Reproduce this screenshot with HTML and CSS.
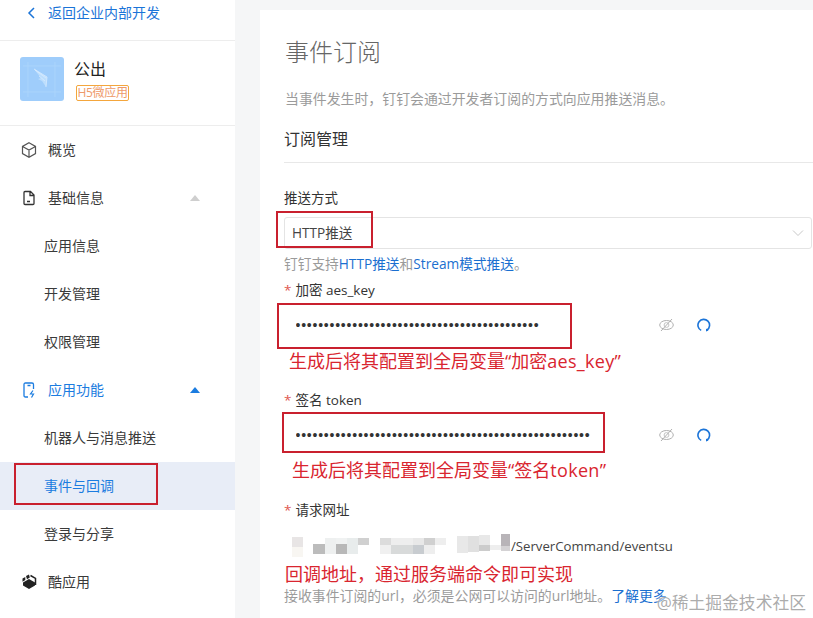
FILE: index.html
```html
<!DOCTYPE html>
<html lang="zh-CN">
<head>
<meta charset="utf-8">
<title>事件订阅</title>
<link rel="stylesheet" href="styles.css">
</head>
<body>
<div class="page">
  <aside class="sidebar">
    <a class="back">
      <svg class="back-icon" width="9" height="14" viewBox="0 0 9 14"><path d="M7 2 2 7l5 5" fill="none" stroke="#1b74d8" stroke-width="1.5"/></svg>
      <span>返回企业内部开发</span>
    </a>
    <div class="app">
      <div class="app-logo">
        <svg width="44" height="44" viewBox="0 0 44 44"><rect width="44" height="44" rx="3" fill="#9fcdfb"/><path d="M8 5v35M35 5v35M3 9h38M3 35h38" stroke="#add5fc" stroke-width=".8"/><path d="M14 12 27 20 26 30 22 24 18 22 21 21 14 12z" fill="#bcdefd"/><path d="M15 13 26 21M19 19l6 5M14 12 27 20 26 30" fill="none" stroke="#d8ebfe" stroke-width=".8"/></svg>
      </div>
      <div class="app-info">
        <div class="app-name">公出</div>
        <span class="app-tag">H5微应用</span>
      </div>
    </div>
    <nav class="menu">
      <div class="menu-item">
        <svg class="menu-icon" width="16" height="16" viewBox="0 0 16 16"><path d="M8 .8l6.500 3.600v7.200L8 15.200l-6.500-3.600V4.400zM1.500 4.400 8 8l6.500-3.600M8 8v7.200" fill="none" stroke="#555" stroke-width="1.200"/></svg>
        <span>概览</span>
      </div>
      <div class="menu-item">
        <svg class="menu-icon" width="16" height="16" viewBox="0 0 16 16"><path d="M3 2.500Q3 1.500 4 1.500h5.500L13 5v8.500q0 1-1 1H4q-1 0-1-1zM9 1.500V5.500h4M6 11.500h3" fill="none" stroke="#333" stroke-width="1.300"/></svg>
        <span class="menu-label">基础信息</span>
        <i class="caret"></i>
      </div>
      <div class="menu-sub">应用信息</div>
      <div class="menu-sub">开发管理</div>
      <div class="menu-sub">权限管理</div>
      <div class="menu-item is-open">
        <svg class="menu-icon" width="16" height="16" viewBox="0 0 16 16"><path d="M7 15H4.500Q3 15 3 13.500v-11Q3 1 4.500 1h6.500Q12.500 1 12.500 2.500V7M6.500 3.500h3" fill="none" stroke="#1b7ce0" stroke-width="1.300"/><path d="M12 8.500 9.500 12h3L10.500 15.500" fill="none" stroke="#1b7ce0" stroke-width="1.200"/></svg>
        <span class="menu-label">应用功能</span>
        <i class="caret"></i>
      </div>
      <div class="menu-sub">机器人与消息推送</div>
      <div class="menu-sub is-active">事件与回调</div>
      <div class="menu-sub">登录与分享</div>
      <div class="menu-item">
        <svg class="menu-icon" width="16" height="16" viewBox="0 0 16 16"><path d="M2 8.500 8 5l6 3.500v3L8 15l-6-3.500z" fill="#222"/><path d="M9.500 1.500 14.500 4.400V11" fill="none" stroke="#222" stroke-width="1.500"/><path d="M5 2l3-1.500 .8 3-2.800 1.700zM1.500 4.500 4.300 3v3L1.500 7.800z" fill="#222"/></svg>
        <span>酷应用</span>
      </div>
    </nav>
  </aside>

  <main class="card">
    <h1 class="title">事件订阅</h1>
    <p class="desc">当事件发生时，钉钉会通过开发者订阅的方式向应用推送消息。</p>
    <h2 class="section">订阅管理</h2>

    <div class="label label-first">推送方式</div>
    <div class="select">
      <span>HTTP推送</span>
      <svg width="12" height="8" viewBox="0 0 12 8"><path d="M1 1.500l5 5 5-5" fill="none" stroke="#c8c8c8" stroke-width="1"/></svg>
    </div>
    <p class="help">钉钉支持<a class="link">HTTP推送</a>和<a class="link">Stream模式推送</a>。</p>

    <div class="label label-req label-second"><i class="star">*</i>加密 aes_key</div>
    <div class="secret-row">
      <span class="dots">•••••••••••••••••••••••••••••••••••••••••••</span>
      <svg class="eye" width="15" height="14" viewBox="0 0 15 14"><ellipse cx="7.500" cy="7" rx="6.800" ry="4.500" fill="none" stroke="#b0b0b0"/><circle cx="7.500" cy="7" r="2.400" fill="none" stroke="#c4c4c4"/><path d="M2 13 13 1" stroke="#b0b0b0"/></svg>
      <svg class="refresh" width="14" height="14" viewBox="0 0 14 14"><path d="M4.200 12.400A5.800 5.800 0 1 1 10 12" fill="none" stroke="#1b74d8" stroke-width="1.600"/><path d="M9 10.500v3l2.500-1z" fill="#1b74d8"/></svg>
    </div>
    <p class="note note-aes">生成后将其配置到全局变量“加密<span class="note-latin">aes_key</span>”</p>

    <div class="label label-req label-third"><i class="star">*</i>签名 token</div>
    <div class="secret-row">
      <span class="dots">••••••••••••••••••••••••••••••••••••••••••••••••••••</span>
      <svg class="eye" width="15" height="14" viewBox="0 0 15 14"><ellipse cx="7.500" cy="7" rx="6.800" ry="4.500" fill="none" stroke="#b0b0b0"/><circle cx="7.500" cy="7" r="2.400" fill="none" stroke="#c4c4c4"/><path d="M2 13 13 1" stroke="#b0b0b0"/></svg>
      <svg class="refresh" width="14" height="14" viewBox="0 0 14 14"><path d="M4.200 12.400A5.800 5.800 0 1 1 10 12" fill="none" stroke="#1b74d8" stroke-width="1.600"/><path d="M9 10.500v3l2.500-1z" fill="#1b74d8"/></svg>
    </div>
    <p class="note note-token">生成后将其配置到全局变量“签名<span class="note-latin">token</span>”</p>

    <div class="label label-req label-fourth"><i class="star">*</i>请求网址</div>
    <div class="url-row">
      <svg class="mosaic" width="227" height="32" viewBox="285 530 227 32">
        <rect x="292" y="538" width="11" height="10" fill="#e8e5e5"/>
        <rect x="292" y="548" width="11" height="10" fill="#f8f6f2"/>
        <rect x="313" y="545" width="12" height="10" fill="#bcbcbc"/>
        <rect x="325" y="539" width="11" height="16" fill="#eef0f0"/>
        <rect x="336" y="545" width="11" height="10" fill="#b8b8b8"/>
        <rect x="336" y="539" width="11" height="6" fill="#f0f2f2"/>
        <rect x="347" y="539" width="11" height="16" fill="#e8ecec"/>
        <rect x="358" y="539" width="11" height="7" fill="#d0d0d0"/>
        <rect x="380" y="539" width="11" height="7" fill="#dcdcdc"/>
        <rect x="380" y="546" width="11" height="9" fill="#f0f0f0"/>
        <rect x="391" y="539" width="22" height="7" fill="#eeeeee"/>
        <rect x="391" y="546" width="22" height="9" fill="#d8dada"/>
        <rect x="413" y="539" width="11" height="7" fill="#e8e8e8"/>
        <rect x="413" y="546" width="11" height="9" fill="#c8ccd0"/>
        <rect x="424" y="539" width="11" height="7" fill="#d0d0d0"/>
        <rect x="424" y="546" width="11" height="9" fill="#eeeeee"/>
        <rect x="435" y="539" width="11" height="7" fill="#eeeeee"/>
        <rect x="457" y="537" width="11" height="17" fill="#e8e8e8"/>
        <rect x="468" y="537" width="11" height="16" fill="#e0e0e0"/>
        <rect x="479" y="536" width="11" height="10" fill="#e8e8e8"/>
        <rect x="479" y="546" width="11" height="6" fill="#cccccc"/>
        <rect x="490" y="546" width="12" height="5" fill="#eeeeee"/>
        <rect x="501" y="535" width="9" height="12" fill="#b8b4b8"/>
        <rect x="501" y="547" width="9" height="5" fill="#d4d2d4"/>
      </svg>
      <span class="url-text">/ServerCommand/eventsub</span>
    </div>
    <p class="note note-url">回调地址，通过服务端命令即可实现</p>
    <p class="help help-tight">接收事件订阅的url，必须是公网可以访问的url地址。<a class="link">了解更多</a></p>
  </main>

  <div class="mark mark-nav"></div>
  <div class="mark mark-select"></div>
  <div class="mark mark-aes"></div>
  <div class="mark mark-token"></div>
  <div class="watermark">@稀土掘金技术社区</div>
</div>
</body>
</html>
```
FILE: styles.css
```css
* { box-sizing: border-box; }
html, body { margin: 0; padding: 0; }
body {
  font-family: "Open Sans", "Noto Sans CJK SC", sans-serif;
  color: #333;
  background: #f5f6f7;
}
p, h1, h2 { margin: 0; font-weight: 400; }
i { font-style: normal; }

.page {
  position: relative;
  display: flex;
  width: 813px;
  height: 618px;
  overflow: hidden;
}

/* sidebar */
.sidebar {
  width: 235px;
  flex: none;
  background: #fff;
  font-size: 14px;
  line-height: 20px;
}
.back {
  display: flex;
  align-items: center;
  height: 41px;
  padding: 0 0 15px 27px;
  border-bottom: 1px solid #ededed;
  color: #1b74d8;
}
.back-icon { margin-right: 12px; }
.app {
  display: flex;
  height: 85px;
  padding: 16px 0 0 20px;
  border-bottom: 1px solid #ededed;
}
.app-logo { width: 44px; height: 44px; }
.app-logo svg { display: block; }
.app-info { margin-left: 10px; }
.app-name { font-size: 16px; line-height: 24px; color: #222; }
.app-tag {
  display: block;
  width: 53px;
  height: 16px;
  margin: 4px 0 0 2px;
  border: 1px solid #f4a63d;
  border-radius: 2px;
  font-size: 12px;
  line-height: 14px;
  text-align: center;
  white-space: nowrap;
  color: #ee9a6a;
  letter-spacing: -.3px;
}
.menu-item, .menu-sub {
  display: flex;
  align-items: center;
  height: 48px;
  color: #3a3a3a;
}
.menu-item { padding-left: 21px; }
.menu-sub { padding-left: 44px; }
.menu-icon { margin-right: 11px; flex: none; }
.menu-label { flex: 1; }
.caret {
  width: 0;
  height: 0;
  margin-right: 35px;
  border-left: 5px solid transparent;
  border-right: 5px solid transparent;
  border-bottom: 6px solid #cfcfcf;
}
.is-open { color: #1b7ce0; }
.is-open .caret { border-bottom-color: #1b7ce0; }
.is-active { background: #e8edf7; color: #1b7ce0; }

/* card */
.card {
  flex: 1;
  margin: 10px 0 0 25px;
  padding: 26px 0 0 25px;
  background: #fff;
  font-size: 14px;
  line-height: 20px;
  min-width: 0;
}
.title { font-size: 24px; line-height: 32px; font-weight: 300; color: #666; }
.desc { margin-top: 21px; color: #9b9b9b; font-size: 13.9px; }
.section {
  margin: 18px 0 0 -1px;
  padding-bottom: 11px;
  border-bottom: 1px solid #e8e8e8;
  font-size: 16px;
  line-height: 24px;
  color: #333;
}
.label { margin-left: -1px; color: #333; font-size: 13.5px; }
.label-first { margin-top: 25px; }
.label-second { margin-top: 6px; }
.label-third { margin-top: 17px; }
.label-fourth { margin-top: 18px; }
.star { margin-right: 4px; color: #e0554f; }
.select {
  display: flex;
  align-items: center;
  justify-content: space-between;
  height: 32px;
  margin: 9px 1px 0 -1px;
  padding: 0 7px 0 7px;
  border: 1px solid #e4e4e4;
  border-radius: 3px;
  font-size: 13.6px;
  color: #444;
}
.help { margin: 5px 0 0 -1px; color: #9b9b9b; font-size: 13.7px; }
.help-tight { margin-top: 0; font-size: 13.9px; }
.link { color: #1a6fd0; }
.secret-row {
  display: flex;
  align-items: center;
  height: 32px;
  margin-top: 9px;
  padding-left: 10.5px;
}
.dots {
  width: 370px;
  flex: none;
  font-family: "Liberation Sans", sans-serif;
  font-size: 14px;
  letter-spacing: .77px;
  color: #333;
  white-space: nowrap;
  overflow: hidden;
}
.eye { margin-left: -6.5px; }
.refresh { margin-left: 23px; }
.note {
  height: 24px;
  font-size: 18px;
  line-height: 24px;
  color: #d9252f;
  white-space: nowrap;
}
.note-latin { letter-spacing: .3px; }
.note-aes { margin: 8px 0 0 4px; }
.note-token { margin: 7px 0 0 7px; }
.note-url { margin: 1px 0 0 0; }
.url-row {
  display: flex;
  align-items: center;
  width: 388px;
  height: 32px;
  margin-top: 9px;
  overflow: hidden;
  white-space: nowrap;
  color: #444;
  font-size: 13.2px;
}
.mosaic { flex: none; }
.url-text { margin: 2px 0 0 -1px; }

/* annotations over the screenshot */
.mark {
  position: absolute;
  border: 2px solid #c9202e;
  pointer-events: none;
}
.mark-nav { left: 14px; top: 463px; width: 144px; height: 42px; }
.mark-select { left: 276px; top: 211px; width: 97px; height: 37px; }
.mark-aes { left: 277px; top: 303px; width: 295px; height: 46px; }
.mark-token { left: 282px; top: 412px; width: 323px; height: 41px; }
.watermark {
  position: absolute;
  right: 7px;
  bottom: 3px;
  font-size: 16.800px;
  line-height: 24px;
  color: rgba(150, 150, 150, .8);
  text-shadow: 0 0 2px #fff, 0 0 2px #fff;
  white-space: nowrap;
}
```
